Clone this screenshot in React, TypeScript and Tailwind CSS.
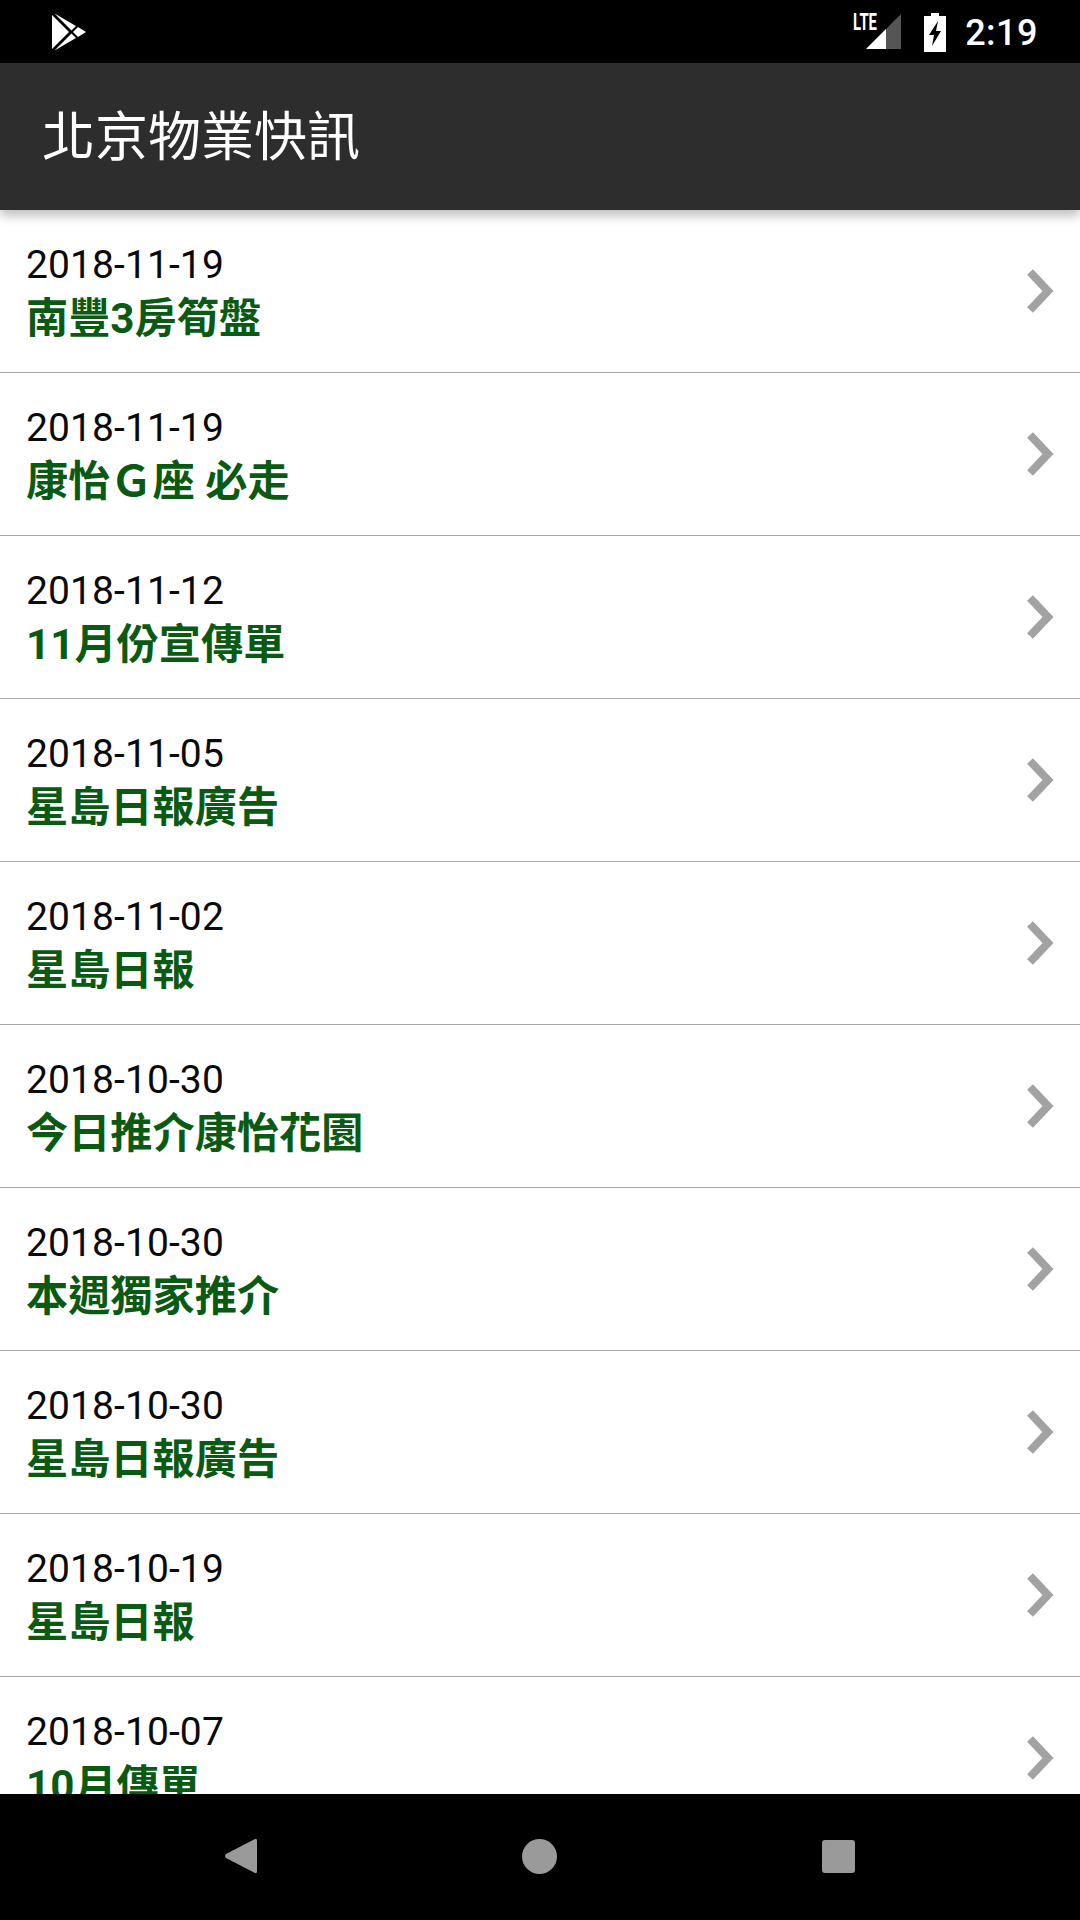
const items = [
  ["2018-11-19", "南豐3房筍盤"],
  ["2018-11-19", "康怡Ｇ座 必走"],
  ["2018-11-12", "11月份宣傳單"],
  ["2018-11-05", "星島日報廣告"],
  ["2018-11-02", "星島日報"],
  ["2018-10-30", "今日推介康怡花園"],
  ["2018-10-30", "本週獨家推介"],
  ["2018-10-30", "星島日報廣告"],
  ["2018-10-19", "星島日報"],
  ["2018-10-07", "10月傳單"],
];

function Chevron() {
  return (
    <svg width="30" height="44" viewBox="0 0 30 44" className="shrink-0">
      <path d="M4 3 L22 22 L4 41" fill="none" stroke="#a2a2a2" strokeWidth="8" />
    </svg>
  );
}

export default function App() {
  return (
    <div className="w-[1080px] h-[1920px] flex flex-col overflow-hidden bg-white font-['Roboto','Noto_Sans_CJK_TC',sans-serif]">
      <div className="h-[63px] shrink-0 bg-black flex items-center text-white pl-[51px] pr-[42px]">
        <svg width="36" height="38" viewBox="0 0 36 38">
          <path d="M1 2 L1 36 L18 19 Z" fill="#fff" />
          <path d="M3.5 0.5 L25 13 L20.5 17.5 Z" fill="#fff" />
          <path d="M3.5 37.5 L25 25 L20.5 20.5 Z" fill="#fff" />
          <path d="M27 14 L35 19 L27 24 L22 19 Z" fill="#fff" />
        </svg>
        <div className="flex-1" />
        <div className="relative w-[46px] h-[36px] mr-[22px]">
          <svg width="36" height="36" viewBox="0 0 36 36" className="absolute right-0 top-0">
            <path d="M35 0 L35 35 L0 35 Z" fill="#555" />
            <path d="M20 15 L20 35 L0 35 Z" fill="#fff" />
          </svg>
          <span className="absolute left-[-3px] top-[-4px] text-[24px] font-bold leading-[24px] font-['Roboto'] scale-x-[0.62] origin-left">LTE</span>
        </div>
        <svg width="22" height="39" viewBox="0 0 22 39" className="mr-[19px] mt-[2px]">
          <path fillRule="evenodd" d="M7 0 H15 V3 H22 V39 H0 V3 H7 Z M14 8 L5 22 H10 L8 33 L17 18 H12 Z" fill="#fff" />
        </svg>
        <span className="text-[36px] leading-none tracking-[0.5px] font-medium font-['Roboto'] mt-[2px]">2:19</span>
      </div>
      <div className="relative z-10 h-[147px] shrink-0 bg-[#2d2d2d] flex items-center pl-[42px] pb-[7px] shadow-[0_6px_10px_rgba(0,0,0,0.25)]">
        <span className="text-white text-[53px] leading-none font-['Noto_Sans_CJK_TC','Noto_Sans_CJK_SC',sans-serif]">北京物業快訊</span>
      </div>
      <div className="flex-1 overflow-hidden">
        {items.map(([date, title], i) => (
          <div key={i} className="h-[163px] flex items-center border-b border-[#a8a8a8] pl-[26px] pr-[24px]">
            <div className="flex-1 min-w-0 pt-[6px]">
              <div className="text-[39px] leading-[50px] tracking-[0.1px] text-[#0a0a0a]">{date}</div>
              <div className="text-[42.2px] leading-[58px] font-bold text-[#0a5a14]">{title}</div>
            </div>
            <Chevron />
          </div>
        ))}
      </div>
      <div className="h-[126px] shrink-0 bg-black flex items-center relative">
        <div className="flex w-full items-center justify-between pl-[225px] pr-[225px] pb-[2px]">
          <svg width="32" height="36" viewBox="0 0 32 36">
            <path d="M30 1 Q32 0 32 3 L32 33 Q32 36 30 35 L1 20 Q-1 18 1 16 Z" fill="#9a9a9a" />
          </svg>
          <div className="w-[35px] h-[35px] rounded-full bg-[#9a9a9a]" />
          <div className="w-[33px] h-[33px] rounded-[3px] bg-[#9a9a9a]" />
        </div>
      </div>
    </div>
  );
}
